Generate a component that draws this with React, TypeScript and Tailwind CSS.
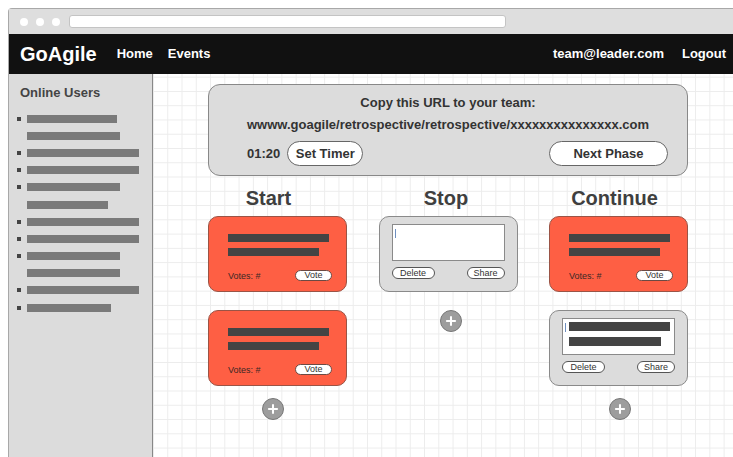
import { Plus } from "lucide-react";

type Note =
  | { kind: "vote"; lines: number[] }
  | { kind: "edit"; lines: number[] };

type Column = {
  title: string;
  titleShift: string;
  notes: Note[];
  addGap: string;
  addShift: string;
};

const COLUMNS: Column[] = [
  {
    title: "Start",
    titleShift: "pr-[18px]",
    notes: [
      { kind: "vote", lines: [101, 91] },
      { kind: "vote", lines: [101, 91] },
    ],
    addGap: "mt-[12px]",
    addShift: "pr-[9px]",
  },
  {
    title: "Stop",
    titleShift: "pr-[4px]",
    notes: [{ kind: "edit", lines: [] }],
    addGap: "mt-[18px]",
    addShift: "pl-[5px]",
  },
  {
    title: "Continue",
    titleShift: "pr-[8px]",
    notes: [
      { kind: "vote", lines: [101, 91] },
      { kind: "edit", lines: [101, 92] },
    ],
    addGap: "mt-[12px]",
    addShift: "pl-[3px]",
  },
];

// each entry is one user, each number one wrapped line of the name
const USERS: number[][] = [
  [90, 93],
  [112],
  [112],
  [93, 81],
  [112],
  [112],
  [93, 93],
  [112],
  [84],
];

function VoteNote({ lines }: { lines: number[] }) {
  return (
    <div className="h-[76px] rounded-[10px] border border-[#9a5446] bg-[#fe5f44] pl-[19px] pr-[14px] pt-[17px]">
      <div className="flex flex-col gap-[6px]">
        {lines.map((w, i) => (
          <div key={i} className="h-[8px] bg-[#444]" style={{ width: w }} />
        ))}
      </div>
      <div className="mt-[14px] flex items-center justify-between">
        <span className="text-[9px] font-medium leading-[10px] text-[#3a2824]">Votes: #</span>
        <button className="flex h-[11px] w-[37px] items-center justify-center rounded-full border border-[#6b4a44] bg-white text-[9px] font-medium leading-none text-[#333]">
          Vote
        </button>
      </div>
    </div>
  );
}

function EditNote({ lines }: { lines: number[] }) {
  return (
    <div className="h-[76px] rounded-[10px] border border-[#8a8a8a] bg-[#dcdcdc] px-[12px] pt-[7px]">
      <div className="relative h-[37px] border border-[#8a8a8a] bg-white pl-[6px] pt-[3px]">
        <div className="absolute left-[2px] top-[4px] h-[9px] w-px bg-[#6f8fbf]" />
        <div className="flex flex-col gap-[6px]">
          {lines.map((w, i) => (
            <div key={i} className="h-[9px] bg-[#444]" style={{ width: w }} />
          ))}
        </div>
      </div>
      <div className="mt-[6px] flex items-center justify-between">
        <button className="flex h-[12px] w-[43px] items-center justify-center rounded-full border border-[#555] bg-white text-[9px] font-medium leading-none text-[#333]">
          Delete
        </button>
        <button className="flex h-[12px] w-[38px] items-center justify-center rounded-full border border-[#555] bg-white text-[9px] font-medium leading-none text-[#333]">
          Share
        </button>
      </div>
    </div>
  );
}

function AddButton() {
  return (
    <button className="flex h-[22px] w-[22px] items-center justify-center rounded-full border border-[#777] bg-[#9d9d9d] text-white">
      <Plus className="h-[14px] w-[14px]" strokeWidth={3.5} />
    </button>
  );
}

export default function App() {
  return (
    <div className="h-[457px] w-[733px] overflow-hidden bg-white font-['Liberation_Sans',Arial,sans-serif]">
      <div className="ml-[8px] mt-[8px] flex h-[449px] flex-col rounded-tl-[4px] border-l border-t border-[#a8a8a8]">
        {/* window chrome */}
        <div className="flex h-[25px] shrink-0 items-center bg-[#dedede] pl-[11px]">
          <div className="flex gap-[8px]">
            <span className="h-[8px] w-[8px] rounded-full bg-white" />
            <span className="h-[8px] w-[8px] rounded-full bg-white" />
            <span className="h-[8px] w-[8px] rounded-full bg-white" />
          </div>
          <div className="ml-[9px] h-[13px] w-[437px] rounded-[3px] border border-[#c4c4c4] bg-white" />
        </div>

        {/* top nav */}
        <div className="flex h-[40px] shrink-0 items-center bg-[#111] pl-[11px] pr-[7px] text-white">
          <span className="text-[20px] font-bold leading-none">GoAgile</span>
          <span className="ml-[20px] text-[13px] font-bold">Home</span>
          <span className="ml-[15px] text-[13px] font-bold">Events</span>
          <span className="ml-auto text-[13px] font-bold">team@leader.com</span>
          <span className="ml-[18px] text-[13px] font-bold">Logout</span>
        </div>

        <div className="flex min-h-0 flex-1">
          {/* online users */}
          <aside className="w-[144px] shrink-0 border-r border-[#888] bg-[#dcdcdc] pl-[8px] pt-[11px]">
            <h2 className="pl-[3px] text-[13px] font-bold leading-[15px] text-[#444]">Online Users</h2>
            <ul className="mt-[10px] flex flex-col">
              {USERS.map((user, i) => (
                <li key={i} className="flex flex-col">
                  {user.map((w, j) => (
                    <div key={j} className="flex h-[17.2px] items-center">
                      <span className={j === 0 ? "h-[4px] w-[4px] bg-[#444]" : "h-[4px] w-[4px]"} />
                      <span className="ml-[6px] h-[8px] bg-[#7a7a7a]" style={{ width: w }} />
                    </div>
                  ))}
                </li>
              ))}
            </ul>
          </aside>

          {/* retrospective board */}
          <main className="min-w-0 flex-1 bg-white bg-[linear-gradient(to_right,#ececec_1px,transparent_1px),linear-gradient(to_bottom,#ececec_1px,transparent_1px)] bg-[size:14.28px_14.28px] bg-[position:0px_2.7px] pl-[55px] pt-[10px]">
            <div className="w-[480px]">
              <div className="h-[92px] rounded-[12px] border border-[#888] bg-[#dcdcdc] pt-[10px] text-[#333]">
                <p className="text-center text-[13px] font-bold leading-[16px]">Copy this URL to your team:</p>
                <p className="mt-[6px] text-center text-[13px] font-bold leading-[16px]">
                  wwww.goagile/retrospective/retrospective/xxxxxxxxxxxxxxx.com
                </p>
                <div className="mt-[8px] flex items-center pl-[38px] pr-[19px]">
                  <span className="text-[13px] font-bold">01:20</span>
                  <button className="ml-[7px] h-[25px] w-[76px] rounded-full border border-[#666] bg-white text-[13px] font-bold">
                    Set Timer
                  </button>
                  <button className="ml-auto h-[25px] w-[119px] rounded-full border border-[#666] bg-white text-[13px] font-bold">
                    Next Phase
                  </button>
                </div>
              </div>

              <div className="mt-[10px] grid grid-cols-3 gap-x-[31.5px]">
                {COLUMNS.map((col) => (
                  <div key={col.title} className="flex flex-col">
                    <h3 className={`text-center text-[20px] font-bold leading-[24px] text-[#3f3f3f] ${col.titleShift}`}>
                      {col.title}
                    </h3>
                    <div className="mt-[6px] flex flex-col gap-[18px]">
                      {col.notes.map((n, i) =>
                        n.kind === "vote" ? (
                          <VoteNote key={i} lines={n.lines} />
                        ) : (
                          <EditNote key={i} lines={n.lines} />
                        )
                      )}
                    </div>
                    <div className={`flex justify-center ${col.addGap} ${col.addShift}`}>
                      <AddButton />
                    </div>
                  </div>
                ))}
              </div>
            </div>
          </main>
        </div>
      </div>
    </div>
  );
}
